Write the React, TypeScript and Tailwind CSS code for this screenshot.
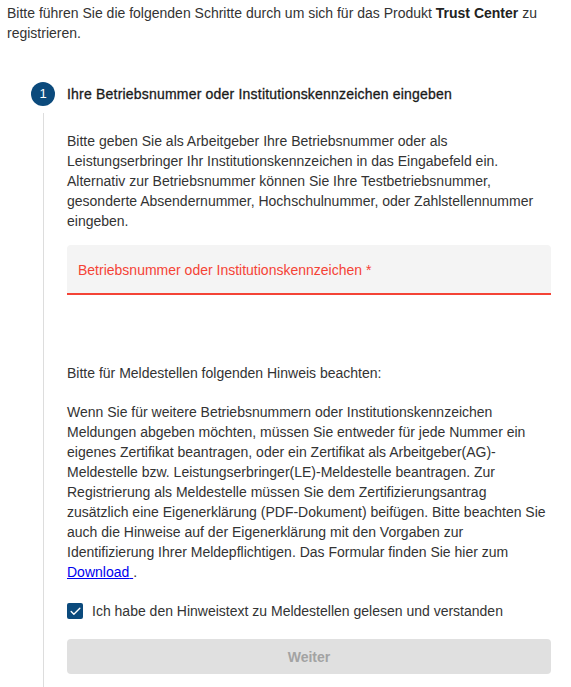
import { Check } from "lucide-react";

export default function App() {
  return (
    <main className="min-h-screen bg-white pl-[7px] pr-[20px] pt-[3px] text-[14px] leading-5 text-[#333] font-['Liberation_Sans',Arial,sans-serif]">
      <p>
        Bitte führen Sie die folgenden Schritte durch um sich für das Produkt{" "}
        <b className="font-bold text-[#222]">Trust Center</b> zu registrieren.
      </p>

      {/* Schritt 1 */}
      <div className="mt-[39px] flex h-6 items-center">
        <div className="ml-[24px] flex h-6 w-6 items-center justify-center rounded-full bg-[#0b4a7c] text-[13px] text-white">
          1
        </div>
        <h2 className="ml-3 text-[#1a1a1a] tracking-[0.2px] [-webkit-text-stroke:0.3px_#1a1a1a]">
          Ihre Betriebsnummer oder Institutionskennzeichen eingeben
        </h2>
      </div>

      <div className="ml-[36px] mt-[7px] border-l border-[#dddddd] pb-4 pl-[23px] pt-[18px]">
        <p>
          Bitte geben Sie als Arbeitgeber Ihre Betriebsnummer oder als Leistungserbringer Ihr
          Institutionskennzeichen in das Eingabefeld ein. Alternativ zur Betriebsnummer können Sie
          Ihre Testbetriebsnummer, gesonderte Absendernummer, Hochschulnummer, oder
          Zahlstellennummer eingeben.
        </p>

        <div className="mt-[14px] flex h-[50px] items-center rounded-t bg-[#f4f4f4] border-b-2 border-[#f44336] pl-[11px] pt-[2px]">
          <span className="text-[#f44336]">Betriebsnummer oder Institutionskennzeichen *</span>
        </div>

        <p className="mt-[68px]">Bitte für Meldestellen folgenden Hinweis beachten:</p>

        <p className="mt-[19px]">
          Wenn Sie für weitere Betriebsnummern oder Institutionskennzeichen Meldungen abgeben
          möchten, müssen Sie entweder für jede Nummer ein eigenes Zertifikat beantragen, oder ein
          Zertifikat als Arbeitgeber(AG)-Meldestelle bzw. Leistungserbringer(LE)-Meldestelle
          beantragen. Zur Registrierung als Meldestelle müssen Sie dem Zertifizierungsantrag
          zusätzlich eine Eigenerklärung (PDF-Dokument) beifügen. Bitte beachten Sie auch die
          Hinweise auf der Eigenerklärung mit den Vorgaben zur Identifizierung Ihrer
          Meldepflichtigen. Das Formular finden Sie hier zum{" "}
          <a href="#" className="text-[#0000ee] underline">
            Download{" "}
          </a>
          .
        </p>

        <label className="mt-[19px] flex items-center gap-[9px]">
          <span className="flex h-4 w-4 items-center justify-center rounded-[2px] bg-[#0b4a7c]">
            <Check size={13} strokeWidth={2.5} className="text-white" />
          </span>
          <span>Ich habe den Hinweistext zu Meldestellen gelesen und verstanden</span>
        </label>

        <button
          type="button"
          disabled
          className="mt-[18px] flex h-[35px] w-full items-center justify-center rounded bg-[#e0e0e0] font-bold text-[#a3a3a3]"
        >
          Weiter
        </button>
      </div>
    </main>
  );
}
